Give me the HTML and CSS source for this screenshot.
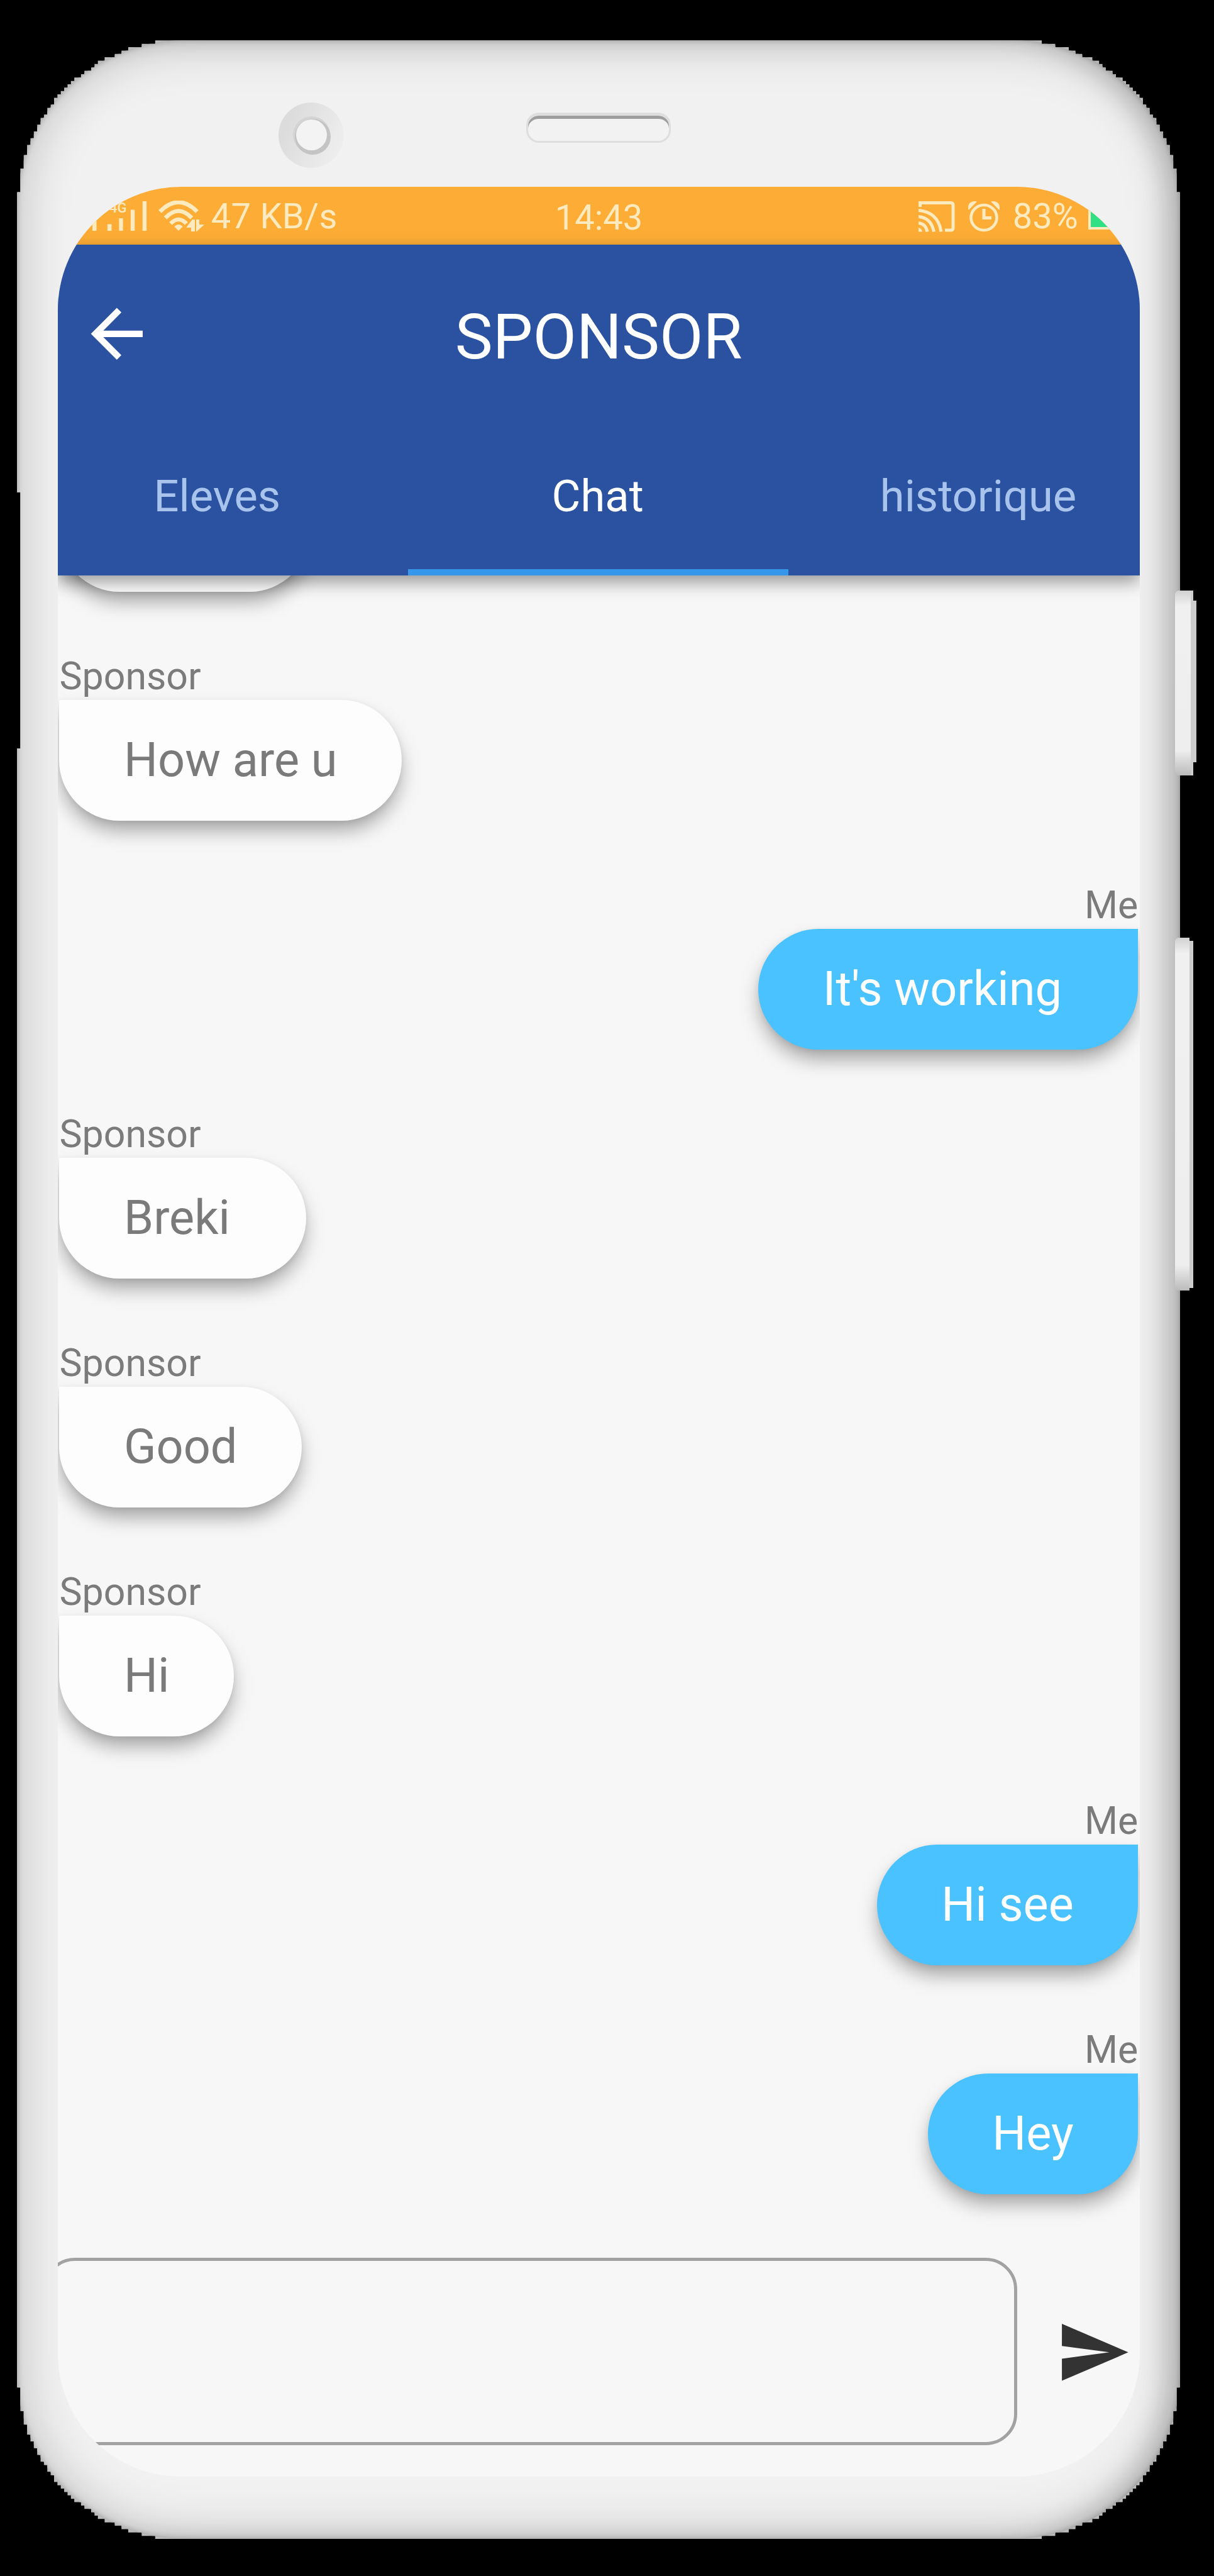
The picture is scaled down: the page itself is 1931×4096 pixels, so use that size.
FILE: index.html
```html
<!DOCTYPE html>
<html lang="fr">
<head>
<meta charset="utf-8">
<title>Sponsor</title>
<link rel="stylesheet" href="styles.css">
</head>
<body>
<svg class="defs" width="0" height="0" aria-hidden="true">
  <clipPath id="case-outline">
    <path transform="scale(5.362)" d="M0 45H1V38H2V34H3V31H4V29H5V27H6V25H7V23H8V22H9V20H10V19H11V17H12V16H13V15H14V14H15V13H16V12H17V11H19V10H20V9H22V8H23V7H24V6H26V5H29V4H31V3H33V2H37V1H41V0H304V1H308V2H312V3H314V4H316V5H319V6H321V7H322V8H323V9H325V10H326V11H328V12H329V13H330V14H331V15H332V16H333V17H334V19H335V20H336V22H337V23H338V25H339V27H340V29H341V31H342V34H343V38H344V45H345V696H344V703H343V707H342V710H341V712H340V714H339V716H338V718H337V719H336V721H335V722H334V724H333V725H332V726H331V727H330V728H329V729H328V730H326V731H325V732H323V733H322V734H321V735H319V736H316V737H314V738H312V739H308V740H304V741H41V740H37V739H33V738H31V737H29V736H26V735H24V734H23V733H22V732H20V731H19V730H17V729H16V728H15V727H14V726H13V725H12V724H11V722H10V721H9V719H8V718H7V716H6V714H5V712H4V710H3V707H2V703H1V696H0V210H1V134H0Z"/>
  </clipPath>
</svg>

<div class="device">
  <div class="side-button power"></div>
  <div class="side-button volume"></div>
  <div class="case">
    <div class="shell">
      <div class="bezel">
        <div class="camera"><div class="lens"></div></div>
        <div class="speaker"></div>
      </div>
      <main class="screen">
        <div class="status">
          <svg class="signal" width="88" height="50" viewBox="0 0 88 50">
            <text x="55.500" y="20" text-anchor="end">4G</text>
            <path d="M1 49V33h6.500V49zM24.900 49V38.500h6.500V49zM43.300 49V29h6.300V49zM61.800 49V15.500h6.500V49zM80.700 49V2h6.500V49z"/>
          </svg>
          <svg class="wifi" width="75" height="50" viewBox="0 0 75 50">
            <g fill="none" stroke="currentColor" stroke-width="6.600">
              <path d="M2.500 17.500Q32 -12.500 61.500 17.500"/>
              <path d="M11 27.500Q32 5.500 53 27.500"/>
              <path d="M19.500 36.500Q32 23.500 44.500 36.500"/>
            </g>
            <path d="M32 38c3 0 5 1.500 6.500 3.500L32 48l-6.500-6.500C27 39.500 29 38 32 38z"/>
            <path d="M44 43L54 30H58V49H52V43zM60 30H65V38H73L61 49H60z"/>
          </svg>
          <span class="speed">47 KB/s</span>
          <span class="clock">14:43</span>
          <svg class="cast" width="58" height="50" viewBox="0 0 58 50">
            <g fill="none" stroke="currentColor" stroke-width="5">
              <path d="M2.500 10V3.500H51.500Q55 3.500 55 7V43Q55 47 51.500 47H42"/>
              <path d="M0 15.500Q31 18 36 49.500"/>
              <path d="M0 25.500Q20 27 24.500 49.500"/>
              <path d="M0 35.500Q11.500 37 14 49.500"/>
            </g>
            <path d="M0 43Q5 44 6 49.500H0z"/>
          </svg>
          <svg class="alarm" width="52" height="50" viewBox="0 0 52 50">
            <ellipse cx="26" cy="27" rx="20.500" ry="20" fill="none" stroke="currentColor" stroke-width="4.600"/>
            <path d="M26 13V27.500H38" fill="none" stroke="currentColor" stroke-width="5"/>
            <path d="M1.500 15C-1 6 5 -1 15 1.500zM50.500 15C53 6 47 -1 37 1.500z"/>
          </svg>
          <span class="charge">83%</span>
          <div class="battery"></div>
        </div>
        <header class="header">
          <div class="toolbar">
            <svg class="back" viewBox="0 0 24 24"><path d="M20 11H7.830l5.590-5.590L12 4l-8 8 8 8 1.410-1.410L7.830 13H20v-2z"/></svg>
            <h1 class="title">SPONSOR</h1>
          </div>
          <nav class="tabs">
            <a class="tab">Eleves</a>
            <a class="tab active">Chat</a>
            <a class="tab">historique</a>
          </nav>
        </header>
        <section class="messages">
          <div class="message"><div class="bubble cut"></div></div>
          <div class="message"><div class="sender">Sponsor</div><div class="bubble">How are u</div></div>
          <div class="message me"><div class="sender">Me</div><div class="bubble">It's working </div></div>
          <div class="message"><div class="sender">Sponsor</div><div class="bubble">Breki </div></div>
          <div class="message"><div class="sender">Sponsor</div><div class="bubble">Good</div></div>
          <div class="message"><div class="sender">Sponsor</div><div class="bubble">Hi</div></div>
          <div class="message me"><div class="sender">Me</div><div class="bubble">Hi see</div></div>
          <div class="message me"><div class="sender">Me</div><div class="bubble">Hey</div></div>
        </section>
        <footer class="composer">
          <div class="field"></div>
          <svg class="send" viewBox="0 0 24 24"><path d="M2.010 21L23 12 2.010 3 2 10l15 2-15 2z"/></svg>
        </footer>
      </main>
    </div>
  </div>
</div>
</body>
</html>
```
FILE: styles.css
```css
* {
  box-sizing: border-box;
}

body {
  margin: 0;
  height: 4096px;
  overflow: hidden;
  background: #000;
  font-family: Roboto, sans-serif;
}

.defs {
  position: absolute;
}

.device {
  position: relative;
  width: 1850px;
  height: 4037.500px;
  padding-top: 64.300px;
  margin-left: 27px;
}

/* Hardware buttons sit over the right edge of the case. */
.side-button {
  position: absolute;
  z-index: 1;
  background: linear-gradient(#d0d0d0, #f0f0f0 24px, #eee calc(100% - 40px), #bbb);
  border-radius: 6px 0 0 6px;
}

.side-button::after {
  content: "";
  position: absolute;
  left: 100%;
  background: #ccc;
}

.power {
  left: 1842px;
  top: 938.500px;
  width: 29px;
  height: 294.800px;
  border-right: 4px solid #ccc;
}

.power::after {
  left: 28px;
  top: 16px;
  width: 6px;
  height: 257px;
}

.volume {
  left: 1842px;
  top: 1490.600px;
  width: 23px;
  height: 561.700px;
}

.volume::after {
  top: 5px;
  width: 6px;
  height: 552px;
}

.case {
  height: 3973.200px;
  background: #bcbcbc;
  clip-path: url(#case-outline);
}

.shell {
  height: 100%;
  border-radius: 265px;
  background: #f1f1f1;
  box-shadow:
    inset 0 0 8px rgba(0, 0, 0, .24),
    inset 0 0 84px rgba(0, 0, 0, .22),
    inset -24px 0 36px rgba(0, 0, 0, .15);
}

.bezel {
  display: flex;
  align-items: flex-start;
  height: 233.200px;
  padding: 98.500px 0 0 416px;
}

.camera {
  display: flex;
  align-items: center;
  justify-content: center;
  width: 104px;
  height: 104px;
  border-radius: 50%;
  background: linear-gradient(115deg, #dcdcdc 20%, #f0f0f0 95%);
}

.lens {
  width: 49px;
  height: 49px;
  border-radius: 50%;
  background: #f3f3f3;
  box-shadow: 2px 3px 0 4px #c4c4c4, 0 0 0 5px #d4d4d4;
}

.speaker {
  width: 230px;
  height: 48px;
  margin: 16.500px 0 0 290px;
  border: 3px solid #dedede;
  border-top-width: 5px;
  border-radius: 20px;
  background: #f2f2f2;
  box-shadow: inset 0 5px 0 #9e9e9e;
}

.screen {
  display: flex;
  flex-direction: column;
  width: 1721px;
  height: 3640.500px;
  margin-left: 64.700px;
  border-radius: 196px;
  overflow: hidden;
  background: #f7f7f7;
}

.status {
  display: flex;
  flex: none;
  height: 91.500px;
  padding: 20.500px 0 0 54px;
  background: #fdad35;
  color: #fdeabf;
  font-size: 56px;
  line-height: 53px;
  white-space: nowrap;
}

.status svg {
  flex: none;
  fill: currentColor;
}

.signal text {
  font-size: 22px;
  font-weight: 500;
}

.wifi {
  margin: 1px 0 0 18px;
}

.speed {
  width: 547px;
  margin-left: 9px;
  letter-spacing: .3px;
}

.clock {
  width: 578px;
  padding-top: 2px;
}

.cast {
  margin-top: 1px;
}

.alarm {
  margin: 1px 0 0 20px;
}

.charge {
  margin-left: 20px;
}

.battery {
  flex: none;
  width: 80px;
  height: 42px;
  margin: 5.500px 0 0 16px;
  border: 4px solid #fdeabf;
  background: #30e085;
}

.header {
  position: relative;
  z-index: 1;
  flex: none;
  height: 525.700px;
  background: #2b51a1;
  box-shadow: 0 10px 26px rgba(0, 0, 0, .4);
}

.toolbar {
  display: grid;
  grid-template-columns: 160px 1fr 160px;
  align-items: center;
  height: 282px;
}

.back {
  width: 123.600px;
  height: 123.600px;
  margin: 2px 0 0 32.500px;
  fill: #fff;
}

.title {
  margin: 12px 0 0;
  color: #fff;
  font-size: 101px;
  font-weight: 400;
  line-height: 120px;
  text-align: center;
}

.tabs {
  display: flex;
  height: 243.700px;
  margin: 0 -47px 0 -48px;
}

.tab {
  flex: 1;
  border-bottom: 10px solid transparent;
  color: #a9c4ec;
  font-size: 70.500px;
  line-height: 237px;
  text-align: center;
  text-indent: -2px;
}

.tab.active {
  border-color: #3596ea;
  color: #fff;
}

.messages {
  display: flex;
  flex: none;
  flex-direction: column;
  justify-content: flex-end;
  gap: 98px;
  height: 2574.200px;
  padding: 0 2.400px 0 2.800px;
}

.message {
  display: flex;
  flex: none;
  flex-direction: column;
  align-items: flex-start;
}

.message.me {
  align-items: flex-end;
}

.sender {
  color: #7b7b7b;
  font-size: 60.800px;
  line-height: 74px;
}

.bubble {
  height: 192px;
  padding: 0 102.500px;
  border-radius: 0 96px 96px 96px;
  background: #fdfdfd;
  box-shadow: 0 18px 32px -4px rgba(0, 0, 0, .36), 0 2px 10px rgba(0, 0, 0, .06);
  color: #7a7a7a;
  font-size: 75.700px;
  line-height: 191px;
  white-space: pre;
}

.me .bubble {
  border-radius: 96px 0 96px 96px;
  background: #4ac2ff;
  color: #fff;
}

.bubble.cut {
  width: 399px;
}

.composer {
  display: flex;
  align-items: flex-start;
  padding-top: 101px;
}

.field {
  flex: none;
  width: 1549px;
  height: 298.500px;
  margin-left: -23px;
  border: 5px solid #a2a2a2;
  border-radius: 50px;
}

.send {
  flex: none;
  width: 120.700px;
  height: 120.700px;
  margin: 90px 0 0 61.500px;
  fill: #333;
}
```
